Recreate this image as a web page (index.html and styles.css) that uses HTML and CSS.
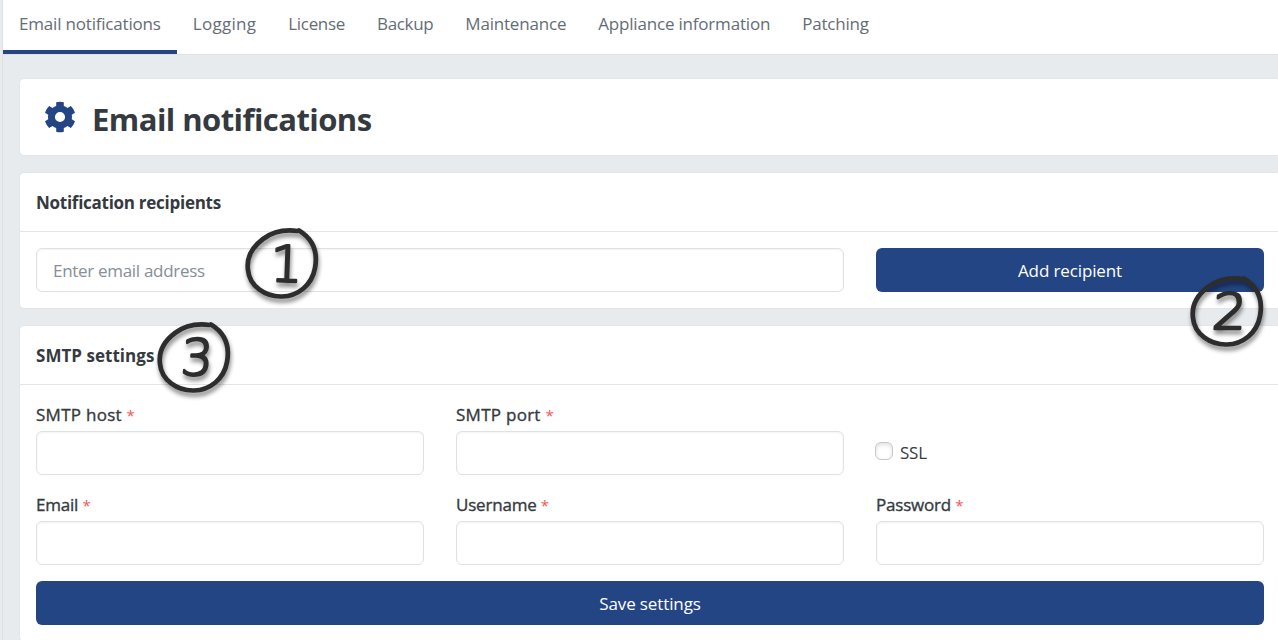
FILE: index.html
```
<!DOCTYPE html>
<html lang="en">
<head>
<meta charset="utf-8">
<title>Email notifications</title>
<link rel="stylesheet" href="styles.css">
</head>
<body>
<div class="page">
  <nav class="tabs">
    <a class="tab tab-active"><span>Email notifications</span></a>
    <a class="tab tab-logging"><span>Logging</span></a>
    <a class="tab tab-license"><span>License</span></a>
    <a class="tab tab-backup"><span>Backup</span></a>
    <a class="tab"><span>Maintenance</span></a>
    <a class="tab"><span>Appliance information</span></a>
    <a class="tab"><span>Patching</span></a>
  </nav>
  <main class="content">
    <header class="card title-card">
      <svg class="gear" viewBox="0 0 32 32" width="32" height="32">
        <path fill-rule="evenodd" d="M12.2 1.2Q16 .2 19.8 1.2V5Q21.8 5.700 23.400 7L26.900 5.100Q29.800 8 31 11.700L27.800 13.800Q28.200 16 27.800 18.200L31 20.300Q29.800 24 26.900 26.900L23.400 25Q21.800 26.300 19.800 27V30.800Q16 31.800 12.200 30.800V27Q10.200 26.300 8.600 25L5.100 26.900Q2.200 24 1 20.300L4.200 18.200Q3.800 16 4.200 13.800L1 11.700Q2.200 8 5.100 5.100L8.600 7Q10.200 5.700 12.200 5ZM16 10.900A5.100 5.100 0 1 0 16 21.100A5.100 5.100 0 1 0 16 10.900Z"/>
      </svg>
      <h1>Email notifications</h1>
    </header>
    <section class="card">
      <h2 class="card-head">Notification recipients</h2>
      <div class="card-body recipient-row">
        <input class="input recipient" placeholder="Enter email address">
        <button class="button">Add recipient</button>
      </div>
    </section>
    <section class="card">
      <h2 class="card-head smtp-head">SMTP settings</h2>
      <div class="card-body fields">
        <label class="field"><span class="label label-smtp">SMTP host <b>*</b></span><input class="input"></label>
        <label class="field"><span class="label label-smtp">SMTP port <b>*</b></span><input class="input"></label>
        <label class="check"><i class="box"></i><span>SSL</span></label>
        <label class="field"><span class="label">Email <b>*</b></span><input class="input"></label>
        <label class="field"><span class="label">Username <b>*</b></span><input class="input"></label>
        <label class="field"><span class="label">Password <b>*</b></span><input class="input"></label>
        <button class="button save">Save settings</button>
      </div>
    </section>
  </main>
  <svg class="marker marker-1" viewBox="0 0 90 90"><use href="#ring"/><text class="digit" transform="translate(33 61) rotate(2)">1</text></svg>
  <svg class="marker marker-2" viewBox="0 0 90 90"><use href="#ring"/><text class="digit" transform="translate(29 61) skewX(-5) scale(1.08 1)">2</text></svg>
  <svg class="marker marker-3" viewBox="0 0 90 90">
    <defs><path id="ring" class="ring" d="M60.500 11C49 9.500 36 11.500 26 19C14 28 9.500 39 11 50C12.500 66 28 77 45 76.500C61 76 75 65 78 48C81 32 76 19 62 10.500"/></defs>
    <use href="#ring"/><text class="digit" transform="translate(31 60.500) skewX(-4)">3</text>
  </svg>
</div>
</body>
</html>
```
FILE: styles.css
```
* { box-sizing: border-box; }
body { margin: 0; height: 640px; overflow: hidden; background: #e8ebee; color: #343a40; font: 400 17px/24px "Open Sans", "Noto Sans", sans-serif; }
.page { position: relative; width: 1280px; height: 640px; overflow: hidden; padding-left: 2px; }
.tabs { display: flex; height: 55px; background: #fff; border-bottom: 1px solid #dee2e6; border-left: 1px solid #dee2e6; color: #646d76; }
.tab { height: 54px; padding: 12px 16px 0; border-bottom: 4px solid transparent; letter-spacing: -.19px; white-space: nowrap; }
.tab-active { border-color: #244584; }
.tab-logging { letter-spacing: .28px; }
.tab-license { letter-spacing: -.3px; }
.tab-backup { letter-spacing: -.35px; }
.content { display: flex; flex-direction: column; gap: 16px; height: 585px; padding: 23px 0 0 17px; border-left: 1px solid #dee2e6; }
.card { flex: none; background: #fff; border: 1px solid #e3e6e9; border-radius: 5px; margin-left: -1px; margin-right: -1px; }
.title-card { display: flex; align-items: center; height: 78px; padding: 0 24px; gap: 16px; }
.gear { fill: #244584; flex: none; }
h1 { margin: 3px 0 0; font-size: 31px; line-height: 40px; font-weight: 700; letter-spacing: -.55px; }
.card-head { height: 59px; margin: 0; padding: 17px 16px; border-bottom: 1px solid #e3e6e9; font-size: 17px; line-height: 25px; font-weight: 700; letter-spacing: -.27px; }
.smtp-head { letter-spacing: .03px; }
.card-body { padding: 16px; }
.recipient-row { display: grid; grid-template-columns: 808px 388px; gap: 32px; }
.input { display: block; width: 100%; height: 44px; padding: 0 16px; border: 1px solid #dee2e6; border-radius: 6px; background: #fff; box-shadow: inset 0 1px 2px #0000000d; font: inherit; letter-spacing: -.3px; outline: 0; }
.input::placeholder { color: #868e96; opacity: 1; }
.button { height: 44px; padding: 2px 0 0; border: 0; border-radius: 6px; background: #244584; color: #fff; font: inherit; letter-spacing: -.12px; }
.fields { display: grid; grid-template-columns: repeat(3, 388px); column-gap: 32px; row-gap: 16px; }
.field { height: 74px; }
.label { display: block; height: 30px; padding-top: 2px; letter-spacing: -.2px; -webkit-text-stroke: .35px #343a40; }
.label-smtp { letter-spacing: .27px; }
.label b { color: #fa5252; font-size: 15px; font-weight: 400; -webkit-text-stroke: 0; }
.check { display: flex; align-items: flex-start; gap: 7px; padding-top: 39px; letter-spacing: -.2px; }
.check span { padding-top: 1px; }
.box { width: 18px; height: 18px; margin: 2px 0 0 -1px; border: 1px solid #c8c8c8; border-radius: 6px; background: #fff; box-shadow: inset 0 2px 4px #0000001f; }
.save { grid-column: 1 / -1; }
.marker { position: absolute; width: 90px; height: 90px; overflow: visible; filter: drop-shadow(1px 4px 2px #00000073); pointer-events: none; }
.marker-1 { left: 237px; top: 220px; }
.marker-2 { left: 1182px; top: 268px; }
.marker-3 { left: 149px; top: 314px; }
.ring { fill: none; stroke: #2d2d2d; stroke-width: 4.700px; stroke-linecap: round; stroke-linejoin: round; }
.digit { font: 200 50px "DejaVu Sans", sans-serif; fill: #2d2d2d; stroke: #2d2d2d; stroke-width: 2.500px; stroke-linejoin: round; }
```
